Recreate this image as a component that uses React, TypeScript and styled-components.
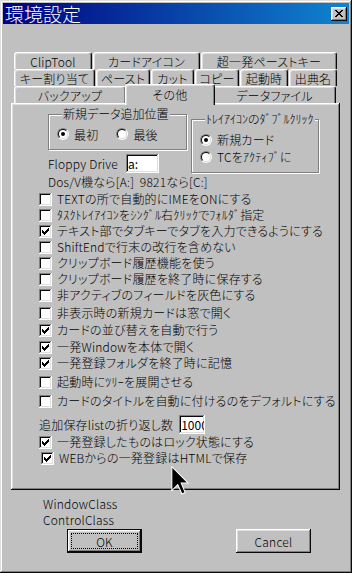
import React from 'react';
import styled, { createGlobalStyle } from 'styled-components';

const FONT = `"Noto Sans CJK JP", "Liberation Sans", sans-serif`;

const GlobalStyle = createGlobalStyle`
  html, body {
    margin: 0;
    padding: 0;
    background: #c0c0c0;
  }
`;

const Window = styled.div`
  position: relative;
  width: 352px;
  height: 573px;
  box-sizing: border-box;
  padding: 3px;
  background: #c0c0c0;
  box-shadow: inset -1px -1px #0a0a0a, inset 1px 1px #dfdfdf, inset -2px -2px #808080, inset 2px 2px #fff;
  display: flex;
  flex-direction: column;
  font-family: ${FONT};
  font-size: 12px;
  font-weight: 300;
  letter-spacing: 0.2px;
  font-feature-settings: "palt";
  color: #000;
  overflow: hidden;
`;

const TitleBar = styled.div`
  height: 21px;
  flex-shrink: 0;
  display: flex;
  align-items: center;
  justify-content: space-between;
  padding: 0 2px;
  background: linear-gradient(90deg, #000080, #1084d0);
`;

const TitleText = styled.span`
  color: #fff;
  font-size: 19px;
  line-height: 21px;
  letter-spacing: 0;
`;

const CloseButton = styled.div`
  width: 16px;
  height: 14px;
  box-sizing: border-box;
  background: #c0c0c0;
  box-shadow: inset -1px -1px #0a0a0a, inset 1px 1px #fff, inset -2px -2px #808080, inset 2px 2px #dfdfdf;
  display: flex;
  align-items: center;
  justify-content: center;
`;

const Body = styled.div`
  display: flex;
  flex-direction: column;
  padding: 28px 9px 0 8px;
`;

const TabStrip = styled.div`
  display: flex;
  flex-direction: column;
  padding-left: 3px;
`;

const TabRow = styled.div`
  display: flex;
  align-items: flex-start;
  height: 17px;
`;

const Tab = styled.div<{ $w: number; $active?: boolean }>`
  position: relative;
  z-index: ${p => (p.$active ? 2 : 1)};
  box-sizing: border-box;
  flex: 0 0 ${p => (p.$active ? p.$w + 3 : p.$w - 1)}px;
  height: ${p => (p.$active ? 21 : 17)}px;
  margin: ${p => (p.$active ? '-2px -2px 0 -2px' : '0 1px 0 0')};
  padding-bottom: ${p => (p.$active ? 2 : 0)}px;
  background: #c0c0c0;
  border-top: 1px solid #fff;
  border-left: 1px solid #fff;
  border-right: 1px solid #0a0a0a;
  border-radius: 3px 3px 0 0;
  box-shadow: inset -1px 0 #808080, inset 1px 1px #dfdfdf;
  display: flex;
  align-items: center;
  justify-content: center;
  line-height: 15px;
  white-space: nowrap;
`;

const Panel = styled.div`
  width: 329px;
  height: 387px;
  box-sizing: border-box;
  padding: 5px 0 0 28px;
  box-shadow: inset -1px -1px #0a0a0a, inset 1px 1px #fff, inset -2px -2px #808080, inset 2px 2px #dfdfdf;
  display: flex;
  flex-direction: column;
`;

const TopGrid = styled.div`
  display: grid;
  grid-template-columns: 139px 128px;
  column-gap: 4px;
  margin-left: 9px;
  align-items: start;
`;

const LeftColumn = styled.div`
  display: flex;
  flex-direction: column;
`;

const Group = styled.fieldset<{ $mt?: number }>`
  margin: ${p => p.$mt ?? 0}px 0 0 0;
  padding: 6px 0 7px 8px;
  min-width: 0;
  border: 1px solid #808080;
  box-shadow: inset 1px 1px #fff, 1px 1px #fff;
`;

const Legend = styled.legend`
  padding: 0 1px;
  margin-left: 5px;
  line-height: 12px;
  background: #c0c0c0;
  white-space: nowrap;
  letter-spacing: 0;
`;

const RadioRow = styled.div<{ $h?: number }>`
  display: flex;
  align-items: center;
  gap: 18px;
  height: ${p => p.$h ?? 16}px;
`;

const RadioItem = styled.label`
  display: flex;
  align-items: center;
  gap: 5px;
  white-space: nowrap;
`;

const RadioOuter = styled.span`
  flex: 0 0 12px;
  width: 12px;
  height: 12px;
  box-sizing: border-box;
  border-radius: 50%;
  border: 1px solid;
  border-color: #808080 #fff #fff #808080;
  display: flex;
  align-items: center;
  justify-content: center;
`;

const RadioInner = styled.span<{ $on?: boolean }>`
  width: 10px;
  height: 10px;
  box-sizing: border-box;
  border-radius: 50%;
  border: 1px solid;
  border-color: #0a0a0a #dfdfdf #dfdfdf #0a0a0a;
  background: #fff;
  display: flex;
  align-items: center;
  justify-content: center;

  &::after {
    content: '';
    width: 4px;
    height: 4px;
    border-radius: 50%;
    background: ${p => (p.$on ? '#000' : 'transparent')};
  }
`;

const FieldRow = styled.div`
  display: flex;
  align-items: center;
  gap: 8px;
  margin-top: 4px;
  white-space: nowrap;
`;

const TextField = styled.input<{ $w: number; $h: number }>`
  width: ${p => p.$w}px;
  height: ${p => p.$h}px;
  box-sizing: border-box;
  margin: 0;
  padding: 0 1px 0 2px;
  border: none;
  outline: none;
  background: #fff;
  font-family: ${FONT};
  font-size: 12px;
  color: #000;
  box-shadow: inset -1px -1px #fff, inset 1px 1px #808080, inset -2px -2px #dfdfdf, inset 2px 2px #0a0a0a;
`;

const Note = styled.div`
  grid-column: 1 / -1;
  margin-top: 2px;
  line-height: 14px;
  white-space: pre;
`;

const CheckList = styled.div`
  display: flex;
  flex-direction: column;
  margin-top: 2px;
`;

const CheckRow = styled.label<{ $mt?: number; $ml?: number }>`
  display: flex;
  align-items: center;
  gap: 5px;
  height: 16px;
  margin-top: ${p => p.$mt ?? 0}px;
  margin-left: ${p => p.$ml ?? 0}px;
  white-space: nowrap;
`;

const CheckLabel = styled.span<{ $clip?: number }>`
  display: block;
  line-height: 16px;
  ${p => (p.$clip ? `max-width: ${p.$clip}px; overflow: hidden;` : '')}
`;

const Box = styled.span`
  flex: 0 0 13px;
  width: 13px;
  height: 13px;
  box-sizing: border-box;
  background: #fff;
  box-shadow: inset -1px -1px #fff, inset 1px 1px #808080, inset -2px -2px #dfdfdf, inset 2px 2px #0a0a0a;
  display: flex;
  align-items: center;
  justify-content: center;
`;

const WrapRow = styled.div`
  display: flex;
  align-items: center;
  gap: 6px;
  height: 20px;
  margin-top: 5px;
  white-space: nowrap;
`;

const Footer = styled.div`
  display: flex;
  flex-direction: column;
  padding: 6px 0 0 32px;
`;

const FooterLabel = styled.div`
  line-height: 16px;
  height: 16px;
`;

const ButtonRow = styled.div`
  display: flex;
  gap: 94px;
  margin: 1px 0 0 24px;
`;

const Button = styled.div<{ $default?: boolean }>`
  width: 75px;
  height: 24px;
  box-sizing: border-box;
  background: #c0c0c0;
  border: ${p => (p.$default ? '1px solid #0a0a0a' : 'none')};
  box-shadow: inset -1px -1px #0a0a0a, inset 1px 1px #fff, inset -2px -2px #808080, inset 2px 2px #dfdfdf;
  display: flex;
  align-items: center;
  justify-content: center;
  padding: ${p => (p.$default ? '3px' : '0')};
`;

const FocusRing = styled.span`
  flex: 1;
  align-self: stretch;
  border: 1px dotted #000;
  display: flex;
  align-items: center;
  justify-content: center;
`;

const Cursor = styled.svg`
  position: absolute;
  left: 171px;
  top: 466px;
  z-index: 10;
`;

const CheckMark = () => (
  <svg width="7" height="7" viewBox="0 0 7 7" shapeRendering="crispEdges">
    <path
      d="M6 0h1v1h-1z M5 1h2v1h-2z M0 2h1v1h-1z M4 2h3v1h-3z M0 3h2v1h-2z M3 3h3v1h-3z M0 4h5v1h-5z M1 5h3v1h-3z M2 6h1v1h-1z"
      fill="#000"
    />
  </svg>
);

const Check: React.FC<{ label: string; checked?: boolean; mt?: number; ml?: number; clip?: number }> = ({
  label,
  checked,
  mt,
  ml,
  clip,
}) => (
  <CheckRow $mt={mt} $ml={ml}>
    <Box>{checked && <CheckMark />}</Box>
    <CheckLabel $clip={clip}>{label}</CheckLabel>
  </CheckRow>
);

const Radio: React.FC<{ label: string; on?: boolean }> = ({ label, on }) => (
  <RadioItem>
    <RadioOuter>
      <RadioInner $on={on} />
    </RadioOuter>
    {label}
  </RadioItem>
);

const tabRows = [
  [
    { label: 'ClipTool', w: 79 },
    { label: 'カードアイコン', w: 108 },
    { label: '超一発ペーストキー', w: 137 },
  ],
  [
    { label: 'キー割り当て', w: 82 },
    { label: 'ペースト', w: 55 },
    { label: 'カット', w: 44 },
    { label: 'コピー', w: 45 },
    { label: '起動時', w: 49 },
    { label: '出典名', w: 49 },
  ],
  [
    { label: 'バックアップ', w: 113 },
    { label: 'その他', w: 87, active: true },
    { label: 'データファイル', w: 124 },
  ],
];

const options = [
  { label: 'TEXTの所で自動的にIMEをONにする' },
  { label: 'ﾀｽｸﾄﾚｲｱｲｺﾝをｼﾝｸﾞﾙ右ｸﾘｯｸでﾌｫﾙﾀﾞ指定', clip: 234 },
  { label: 'テキスト部でタブキーでタブを入力できるようにする', checked: true },
  { label: 'ShiftEndで行末の改行を含めない' },
  { label: 'クリップボード履歴機能を使う' },
  { label: 'クリップボード履歴を終了時に保存する' },
  { label: '非アクティブのフィールドを灰色にする' },
  { label: '非表示時の新規カードは窓で開く', mt: 2 },
  { label: 'カードの並び替えを自動で行う', checked: true, mt: 1 },
  { label: '一発Windowを本体で開く', checked: true, mt: 1 },
  { label: '一発登録フォルダを終了時に記憶', checked: true },
  { label: '起動時にﾂﾘｰを展開させる', mt: 3 },
  { label: 'カードのタイトルを自動に付けるのをデフォルトにする', mt: 3 },
];

const App: React.FC = () => {
  return (
    <>
      <GlobalStyle />
      <Window>
        <TitleBar>
          <TitleText>環境設定</TitleText>
          <CloseButton>
            <svg width="8" height="7" viewBox="0 0 8 7" shapeRendering="crispEdges">
              <path
                d="M0 0h2v1h-2z M6 0h2v1h-2z M1 1h2v1h-2z M5 1h2v1h-2z M2 2h4v1h-4z M3 3h2v1h-2z M2 4h4v1h-4z M1 5h2v1h-2z M5 5h2v1h-2z M0 6h2v1h-2z M6 6h2v1h-2z"
                fill="#000"
              />
            </svg>
          </CloseButton>
        </TitleBar>

        <Body>
          <TabStrip>
            {tabRows.map((row, i) => (
              <TabRow key={i}>
                {row.map(t => (
                  <Tab key={t.label} $w={t.w} $active={'active' in t && t.active}>
                    {t.label}
                  </Tab>
                ))}
              </TabRow>
            ))}
          </TabStrip>

          <Panel>
            <TopGrid>
              <LeftColumn>
                <Group>
                  <Legend>新規データ追加位置</Legend>
                  <RadioRow>
                    <Radio label="最初" on />
                    <Radio label="最後" />
                  </RadioRow>
                </Group>
                <FieldRow>
                  Floppy Drive
                  <TextField $w={33} $h={19} defaultValue="a:" readOnly />
                </FieldRow>
              </LeftColumn>
              <Group $mt={5}>
                <Legend>ﾄﾚｲｱｲｺﾝのﾀﾞﾌﾞﾙｸﾘｯｸ</Legend>
                <RadioRow $h={17}>
                  <Radio label="新規カード" on />
                </RadioRow>
                <RadioRow $h={17}>
                  <Radio label="TCをｱｸﾃｨﾌﾞに" />
                </RadioRow>
              </Group>
              <Note>{'Dos/V機なら[A:]  9821なら[C:]'}</Note>
            </TopGrid>

            <CheckList>
              {options.map(o => (
                <Check key={o.label} {...o} />
              ))}
              <WrapRow>
                追加保存listの折り返し数
                <TextField $w={26} $h={19} defaultValue="1000" readOnly />
              </WrapRow>
              <Check label="一発登録したものはロック状態にする" checked />
              <Check label="WEBからの一発登録はHTMLで保存" checked ml={2} />
            </CheckList>
          </Panel>

          <Footer>
            <FooterLabel>WindowClass</FooterLabel>
            <FooterLabel>ControlClass</FooterLabel>
            <ButtonRow>
              <Button $default>
                <FocusRing>OK</FocusRing>
              </Button>
              <Button>Cancel</Button>
            </ButtonRow>
          </Footer>
        </Body>

        <Cursor width="18" height="29" viewBox="0 0 12 19.5">
          <path d="M0.5 0.5 L0.5 16.5 L4.5 12.5 L7.3 18.8 L9.5 17.8 L6.8 11.5 L11.5 11.5 Z" fill="#000" stroke="#fff" strokeWidth="0.7" />
        </Cursor>
      </Window>
    </>
  );
};

export default App;
